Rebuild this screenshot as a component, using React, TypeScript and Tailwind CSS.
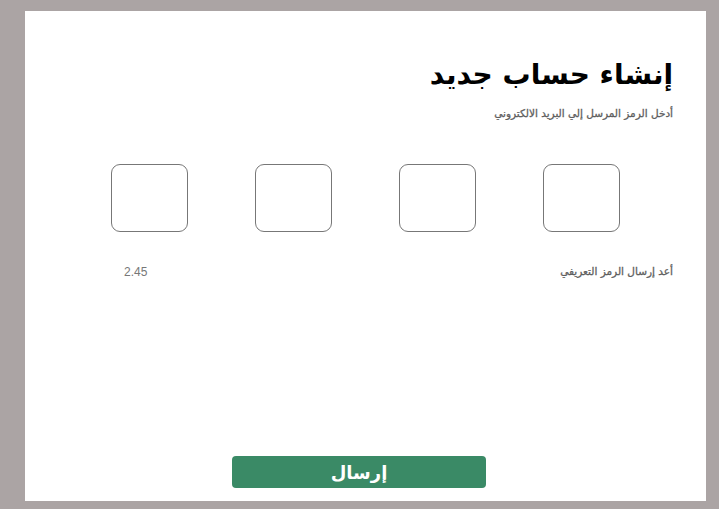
export default function App() {
  const boxes = [0, 1, 2, 3];

  return (
    <div className="min-h-screen w-full bg-[#aba4a4] pt-[11px] pl-[25px]">
      <div
        dir="rtl"
        className="flex h-[490px] w-[681px] flex-col bg-white pr-[33px] pt-[42px] font-['DejaVu_Sans',sans-serif]"
      >
        <h1 className="text-[28px] font-bold leading-[44px] text-black">
          إنشاء حساب جديد
        </h1>
        <p className="mt-[9px] text-[10.5px] text-[#5e5e5e] [-webkit-text-stroke:0.3px_#5e5e5e]">
          أدخل الرمز المرسل إلي البريد الالكتروني
        </p>

        {/* code inputs */}
        <div className="mr-[-33px] mt-[42px] flex justify-center gap-[67px]">
          {boxes.map((b) => (
            <input
              key={b}
              maxLength={1}
              className="h-[68px] w-[77px] rounded-[9px] border border-[#777] text-center text-2xl outline-none"
            />
          ))}
        </div>

        <div className="mt-[31px] flex items-center justify-between pl-[99px]">
          <span className="text-[10.5px] text-[#5e5e5e] [-webkit-text-stroke:0.3px_#5e5e5e]">
            أعد إرسال الرمز التعريفي
          </span>
          <span dir="ltr" className="font-['Liberation_Sans',sans-serif] text-[12px] text-[#777]">
            2.45
          </span>
        </div>

        <div className="mt-auto mb-[13px] flex justify-start pr-[187px]">
          <button className="h-[32px] w-[254px] rounded-[4px] bg-[#3a8a66] text-[18px] font-bold text-white">
            إرسال
          </button>
        </div>
      </div>
    </div>
  );
}
